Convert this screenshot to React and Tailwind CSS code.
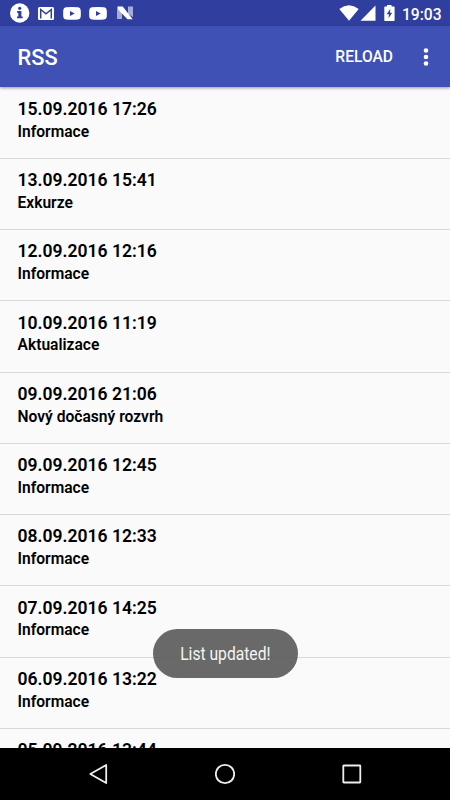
import React from "react";

const items = [
  ["15.09.2016 17:26", "Informace"],
  ["13.09.2016 15:41", "Exkurze"],
  ["12.09.2016 12:16", "Informace"],
  ["10.09.2016 11:19", "Aktualizace"],
  ["09.09.2016 21:06", "Nový dočasný rozvrh"],
  ["09.09.2016 12:45", "Informace"],
  ["08.09.2016 12:33", "Informace"],
  ["07.09.2016 14:25", "Informace"],
  ["06.09.2016 13:22", "Informace"],
  ["05.09.2016 13:44", "Informace"],
];

function YouTubeIcon() {
  return (
    <svg className="h-[13px] w-[18px]" viewBox="0 0 18 13">
      <path fill="#fff" fillRule="evenodd" d="M3 .3Q9-.1 15 .3 17.5.4 17.7 3q.3 3.500 0 7-.2 2.300-2.700 2.500-6 .4-12 0Q.5 12.300.3 10 0 6.500.3 3 .5.500 3 .3ZM7 4v5l4.700-2.500Z" />
    </svg>
  );
}

function StatusBar() {
  return (
    <div className="flex h-[26px] shrink-0 items-center bg-[#303f9f] pl-[10px] pr-[9px] text-white">
      <svg className="h-5 w-5" viewBox="0 0 20 20">
        <circle cx="9.700" cy="10" r="9.700" fill="#fff" />
        <circle cx="9.700" cy="5.300" r="1.600" fill="#303f9f" />
        <path fill="#303f9f" d="M7.200 8.100h4.200v5.300h1.300v1.800H7v-1.800h1.300V9.900H7.200Z" />
      </svg>
      <svg className="ml-2 h-[13px] w-4" viewBox="0 0 16 13">
        <rect width="16" height="13" rx="1.500" fill="#fff" />
        <path d="M2.700 11.500V2.500L8 6.800l5.300-4.300v9" fill="none" stroke="#303f9f" strokeWidth="1.500" />
      </svg>
      <div className="ml-[9px] flex gap-[8px]">
        <YouTubeIcon />
        <YouTubeIcon />
      </div>
      <svg className="ml-[10px] h-[14px] w-4" viewBox="0 0 16 14">
        <path fill="#a5acd6" d="M0 3l5 3v7H0ZM11 .500h5v10.500l-5-3Z" />
        <path fill="#fff" d="M.500.500h5.200L15.700 13.300h-5.200L.500 3Z" />
      </svg>
      <div className="ml-auto flex items-center">
        <svg className="h-[16px] w-5" viewBox="0 0 20 16">
          <path fill="#fff" d="M.3 4Q10-3.300 19.700 4L10 15.800Z" />
        </svg>
        <svg className="ml-[1px] h-[16px] w-4" viewBox="0 0 16 16">
          <path fill="#fff" d="M15.500.500v15.300H.5Z" />
        </svg>
        <svg className="ml-2 h-[16px] w-[11px]" viewBox="0 0 11 16">
          <path fill="#fff" d="M3 0h4.500v1.600H10q.6 0 .6.600v13q0 .7-.6.700H1q-.7 0-.7-.7v-13q0-.6.700-.6h2Z" />
          <path fill="#303f9f" d="M6.300 3.800 2.700 9.300H5l-.5 4 3.700-5.600H6Z" />
        </svg>
        <span className="ml-[7px] w-[39px] whitespace-nowrap pt-[3px] text-[15.600px] font-medium leading-5">19:03</span>
      </div>
    </div>
  );
}

function AppBar() {
  return (
    <div className="z-10 flex h-[61px] shrink-0 items-center bg-[#3f51b5] pl-[17.500px] pr-[21px] text-white shadow-[0_1px_3px_rgba(0,0,0,0.4)]">
      <h1 className="pt-[3px] text-[21.800px] font-medium leading-7">RSS</h1>
      <button className="ml-auto pt-[3px] text-[15.600px] font-medium">RELOAD</button>
      <svg className="ml-[30px] h-[18px] w-[6px]" viewBox="0 0 6 18" fill="#fff">
        <circle cx="3" cy="2.500" r="2.300" />
        <circle cx="3" cy="9" r="2.300" />
        <circle cx="3" cy="15.500" r="2.300" />
      </svg>
    </div>
  );
}

export default function App() {
  return (
    <div className="relative flex h-[800px] w-[450px] flex-col overflow-hidden bg-[#fafafa] font-['Roboto',sans-serif] text-black">
      <StatusBar />
      <AppBar />
      <ul className="min-h-0 flex-1 overflow-hidden pt-[0.500px]">
        {items.map(([date, title]) => (
          <li key={date} className="h-[71.250px] border-b border-[#d9d9d9] pl-[17.500px] pt-[10.400px]">
            <div className="text-[17.550px] font-semibold leading-[22px]">{date}</div>
            <div className="pt-[0.800px] text-[15.600px] font-semibold leading-[22px]">{title}</div>
          </li>
        ))}
      </ul>
      <div className="flex h-[52px] shrink-0 items-center justify-center gap-[107px] bg-black">
        <svg className="h-[22px] w-[20px]" viewBox="0 0 20 22">
          <path d="M18.200 2v18L2.300 11Z" fill="none" stroke="#eee" strokeWidth="1.800" strokeLinejoin="round" />
        </svg>
        <svg className="h-[22px] w-[20px]" viewBox="0 0 20 22">
          <circle cx="10" cy="11" r="9.200" fill="none" stroke="#eee" strokeWidth="1.800" />
        </svg>
        <svg className="h-[22px] w-[20px]" viewBox="0 0 20 22">
          <rect x="1.300" y="2.500" width="17" height="17" rx=".5" fill="none" stroke="#eee" strokeWidth="1.800" />
        </svg>
      </div>
      <div className="absolute left-[152.500px] top-[629px] z-20 flex h-[48.500px] w-[145px] items-center justify-center rounded-full bg-[#5c5c5c]/92 text-[#f5f5f5]">
        <span className="inline-block scale-x-[0.880] whitespace-nowrap pt-[2px] text-[17.800px] leading-6">List updated!</span>
      </div>
    </div>
  );
}
